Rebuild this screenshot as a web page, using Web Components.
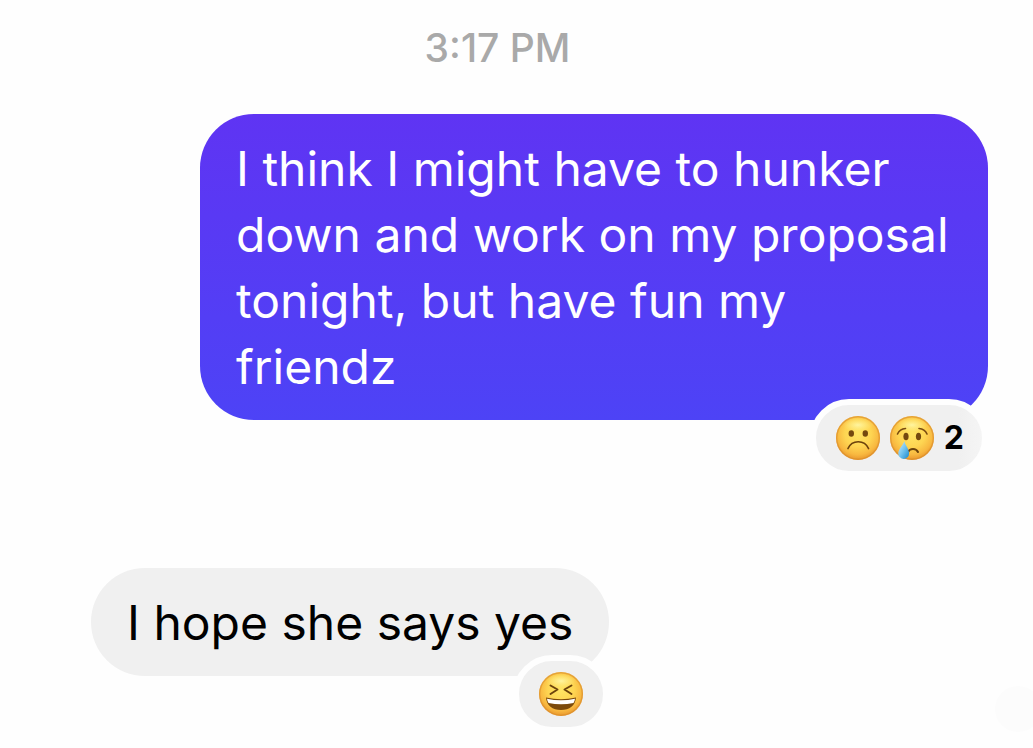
<!DOCTYPE html>
<html lang="en">
<head>
<meta charset="utf-8">
<meta name="viewport" content="width=device-width, initial-scale=1">
<title>Chat</title>
<style>
  body { margin: 0; background: #fefefe; font-family: Inter, "Liberation Sans", sans-serif; color: #000; }
</style>
</head>
<body>
<chat-thread>
  <time-stamp>3:17 PM</time-stamp>
  <chat-message from="me">I think I might have to hunker<br>down and work on my proposal<br>tonight, but have fun my<br>friendz
    <reaction-pill slot="reactions" count="2"><emoji-face name="sad"></emoji-face><emoji-face name="cry"></emoji-face></reaction-pill>
  </chat-message>
  <chat-message from="them">I hope she says yes
    <reaction-pill slot="reactions"><emoji-face name="laugh"></emoji-face></reaction-pill>
  </chat-message>
</chat-thread>
<script>
class Base extends HTMLElement {
  constructor() {
    super();
    this.attachShadow({ mode: 'open' });
  }
  connectedCallback() { this.shadowRoot.innerHTML = this.render(); }
}

customElements.define('chat-thread', class extends Base {
  render() {
    return `<style>
      :host { display: block; position: relative; box-sizing: border-box; min-height: 100vh; overflow: hidden; }
      main { display: flex; flex-direction: column; padding: 24px 0 20px; }
      .ghost { position: absolute; right: -8px; bottom: 16px; width: 46px; height: 46px; border-radius: 50%; background: #fcfcfc; }
    </style><main><slot></slot></main><div class="ghost" aria-hidden="true"></div>`;
  }
});

customElements.define('time-stamp', class extends Base {
  render() {
    return `<style>
      :host { display: block; padding-right: 38px; margin-bottom: 42px; text-align: center; font-size: 39px; line-height: 48px; font-weight: 500; color: #a9a9a9; }
    </style><time datetime="15:17"><slot></slot></time>`;
  }
});

customElements.define('chat-message', class extends Base {
  render() {
    return `<style>
      :host { display: flex; padding: 0 45px 0 91px; margin-bottom: 148px; }
      :host([from="me"]) { justify-content: flex-end; padding-left: 200px; }
      :host([from="them"]) { margin-bottom: 0; padding-bottom: 52px; }
      .bubble { position: relative; box-sizing: border-box; padding: 22px 36px 20px; border-radius: 54px; font-size: 48px; line-height: 66px; background: #f0f0f0; }
      :host([from="me"]) .bubble { flex: 1; max-width: 788px; padding-right: 24px; color: #fff; background: linear-gradient(#5f34f3, #4d43f6); }
      p { margin: 0; }
      .reactions { position: absolute; right: 0; top: calc(100% - 21px); }
    </style><div class="bubble"><p><slot></slot></p><div class="reactions"><slot name="reactions"></slot></div></div>`;
  }
});

customElements.define('reaction-pill', class extends Base {
  render() {
    const n = this.getAttribute('count');
    return `<style>
      :host { display: block; color: #000; }
      .pill { display: flex; align-items: center; gap: 10px; box-sizing: border-box; height: 78px; padding: 0 20px; border: 6px solid #fefefe; border-radius: 39px; background: #f0f0f0; }
      .counted { padding-right: 18px; background: linear-gradient(to right, #f0f0f0 86%, #f5f5f5); }
      .count { font-size: 32px; line-height: 40px; font-weight: 700; }
    </style><div class="pill ${n ? 'counted' : ''}"><slot></slot>${n ? `<span class="count">${n}</span>` : ''}</div>`;
  }
});

const FACES = {
  sad: ['Frowning face', `
    <ellipse cx="15.3" cy="17.5" rx="2.700" ry="3.300" fill="#74490f"/><ellipse cx="29.3" cy="17.5" rx="2.700" ry="3.300" fill="#74490f"/>
    <path d="M12 32.5C16 23.5 28.500 23.500 32.500 32.500" fill="none" stroke="#6b420c" stroke-width="1.700" stroke-linecap="round"/>`],
  cry: ['Crying face', `
    <ellipse cx="16" cy="20.500" rx="2.600" ry="3.800" fill="#74490f"/><ellipse cx="28.500" cy="20.500" rx="2.600" ry="3.800" fill="#74490f"/>
    <path d="M7.500 18C9 14.500 12 12.700 15.500 12.500M29 12.500C32.500 12.700 35.500 14.500 37 18" fill="none" stroke="#7a4c10" stroke-width="1.600" stroke-linecap="round"/>
    <path d="M18 36C20 32 26 32 28 36" fill="none" stroke="#6b420c" stroke-width="2" stroke-linecap="round"/>
    <path d="M14.300 25C13.500 29 8.300 33 8.300 37.500A5.400 5.400 0 0 0 19.100 37.500C19.100 33 15 29 14.300 25Z" fill="url(#tear)"/>`],
  laugh: ['Laughing face', `
    <path d="M11.500 13.500L18.500 17.500L11.500 22M32.500 13.500L25.500 17.500L32.500 22" fill="none" stroke="#6b420c" stroke-width="1.900" stroke-linecap="round" stroke-linejoin="round"/>
    <path d="M7 25.500Q22 29 37 25.500C36.500 33.500 30.500 38 22 38S7.500 33.500 7 25.500Z" fill="#7c4a0b"/>
    <path d="M8 26.700Q22 29.700 36 26.700Q35.600 29.500 34.500 31Q22 33.500 9.500 31Q8.400 29.500 8 26.700Z" fill="#fff"/>`]
};
customElements.define('emoji-face', class extends Base {
  render() {
    const [label, art] = FACES[this.getAttribute('name')];
    return `<style>:host { display: block; width: 44px; height: 44px; } svg { display: block; }</style>
      <svg width="44" height="44" viewBox="0 0 44 44" role="img" aria-label="${label}">
        <defs>
          <radialGradient id="skin" cx=".5" cy=".4" r=".6"><stop offset="0" stop-color="#ffe565"/><stop offset=".5" stop-color="#fed552"/><stop offset=".8" stop-color="#f8b840"/><stop offset="1" stop-color="#e8952c"/></radialGradient>
          <radialGradient id="shine" cx=".5" cy=".5" r=".5"><stop offset="0" stop-color="#fff7a8" stop-opacity=".9"/><stop offset="1" stop-color="#fff08a" stop-opacity="0"/></radialGradient>
          <linearGradient id="tear" x1="0" x2="1" y1="0" y2="1"><stop offset="0" stop-color="#cfeeff"/><stop offset=".5" stop-color="#72c3ee"/><stop offset="1" stop-color="#1787cf"/></linearGradient>
        </defs>
        <circle cx="22" cy="22" r="22" fill="url(#skin)"/>
        <circle cx="22" cy="22" r="21.300" fill="none" stroke="#d98c2a" stroke-opacity=".6" stroke-width="1.400"/>
        <ellipse cx="22" cy="9" rx="15" ry="7" fill="url(#shine)"/>${art}
      </svg>`;
  }
});
</script>
</body>
</html>
